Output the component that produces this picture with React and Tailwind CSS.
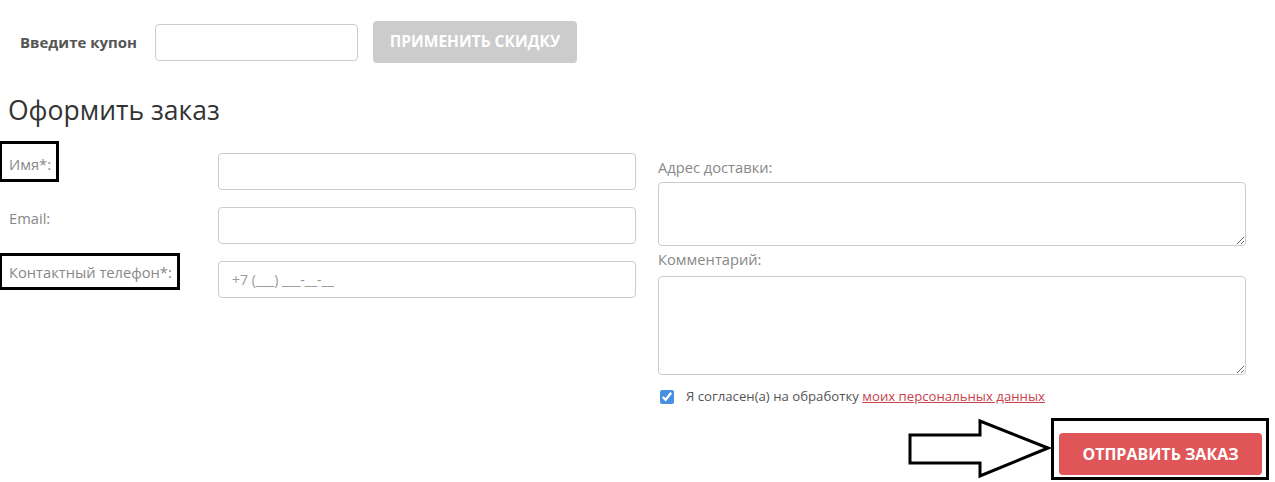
import { useState } from "react";

function Arrow() {
  return (
    <svg width="144" height="62" viewBox="0 0 144 62" className="shrink-0">
      <polygon
        points="3,17 73,17 73,3 141,30 73,58 73,45 3,45"
        fill="white"
        stroke="black"
        strokeWidth="3"
        strokeLinejoin="miter"
      />
    </svg>
  );
}

function Field({ label, boxed, boxClass, placeholder }) {
  return (
    <div className="flex items-start">
      <div className="relative w-[218px] pl-[9px] pt-[1px] text-[14.7px] leading-[20px] text-[#888]">
        {boxed && (
          <div className={`absolute border-[3px] border-black ${boxClass}`} />
        )}
        <span className="relative">{label}</span>
      </div>
      <input
        className="w-[418px] h-[37px] border border-[#ccc] rounded-[4px] px-[13px] text-[14px] text-[#555] placeholder:text-[#999] outline-none"
        placeholder={placeholder}
      />
    </div>
  );
}

export default function App() {
  const [agree, setAgree] = useState(true);

  return (
    <div className="w-[1275px] h-[482px] bg-white overflow-hidden font-['Open_Sans',sans-serif]">
      {/* Купон */}
      <div className="flex items-center pl-[20px] pt-[21px]">
        <span className="w-[135px] text-[15px] font-bold text-[#555]">Введите купон</span>
        <input className="w-[203px] h-[37px] border border-[#ccc] rounded-[4px] outline-none" />
        <button className="ml-[15px] w-[204px] h-[42px] bg-[#cccccc] rounded-[4px] text-white text-[15.5px] font-bold uppercase">
          Применить скидку
        </button>
      </div>

      <h2 className="pl-[8px] mt-[29px] text-[26.5px] leading-[36px] text-[#333]">Оформить заказ</h2>

      <div className="flex mt-[25px]">
        {/* Левая колонка */}
        <div className="flex flex-col gap-[17px]">
          <Field label="Имя*:" boxed boxClass="-left-[1px] -top-[12px] w-[60px] h-[41px]" />
          <Field label="Email:" />
          <Field
            label="Контактный телефон*:"
            boxed
            boxClass="-left-[1px] -top-[8px] w-[181px] h-[37px]"
            placeholder="+7 (___) ___-__-__"
          />
        </div>

        {/* Правая колонка */}
        <div className="ml-[22px] w-[588px] pt-[4px] text-[14.7px] text-[#888]">
          <div className="leading-[20px]">Адрес доставки:</div>
          <textarea className="block mt-[5px] w-full h-[64px] border border-[#ccc] rounded-[4px] outline-none" />
          <div className="mt-[3px] leading-[20px]">Комментарий:</div>
          <textarea className="block mt-[7px] w-full h-[99px] border border-[#ccc] rounded-[4px] outline-none" />
          <label className="flex items-center mt-[12px] pl-[2px] text-[13.2px] text-[#555]">
            <input
              type="checkbox"
              checked={agree}
              onChange={() => setAgree(!agree)}
              className="w-[14px] h-[14px] m-0 accent-[#4a90e2]"
            />
            <span className="ml-[12px]">
              Я согласен(а) на обработку{" "}
              <a href="#" className="text-[#c9414a] underline">моих персональных данных</a>
            </span>
          </label>
        </div>
      </div>

      {/* Отправка */}
      <div className="flex justify-end items-center pr-[6px] mt-[11px]">
        <Arrow />
        <div className="border-[3px] border-black pt-[12px] pl-[5px] pr-[4px] pb-[2px]">
          <button className="w-[203px] h-[42px] bg-[#e05558] rounded-[4px] text-white text-[16px] font-bold uppercase">
            Отправить заказ
          </button>
        </div>
      </div>
    </div>
  );
}
